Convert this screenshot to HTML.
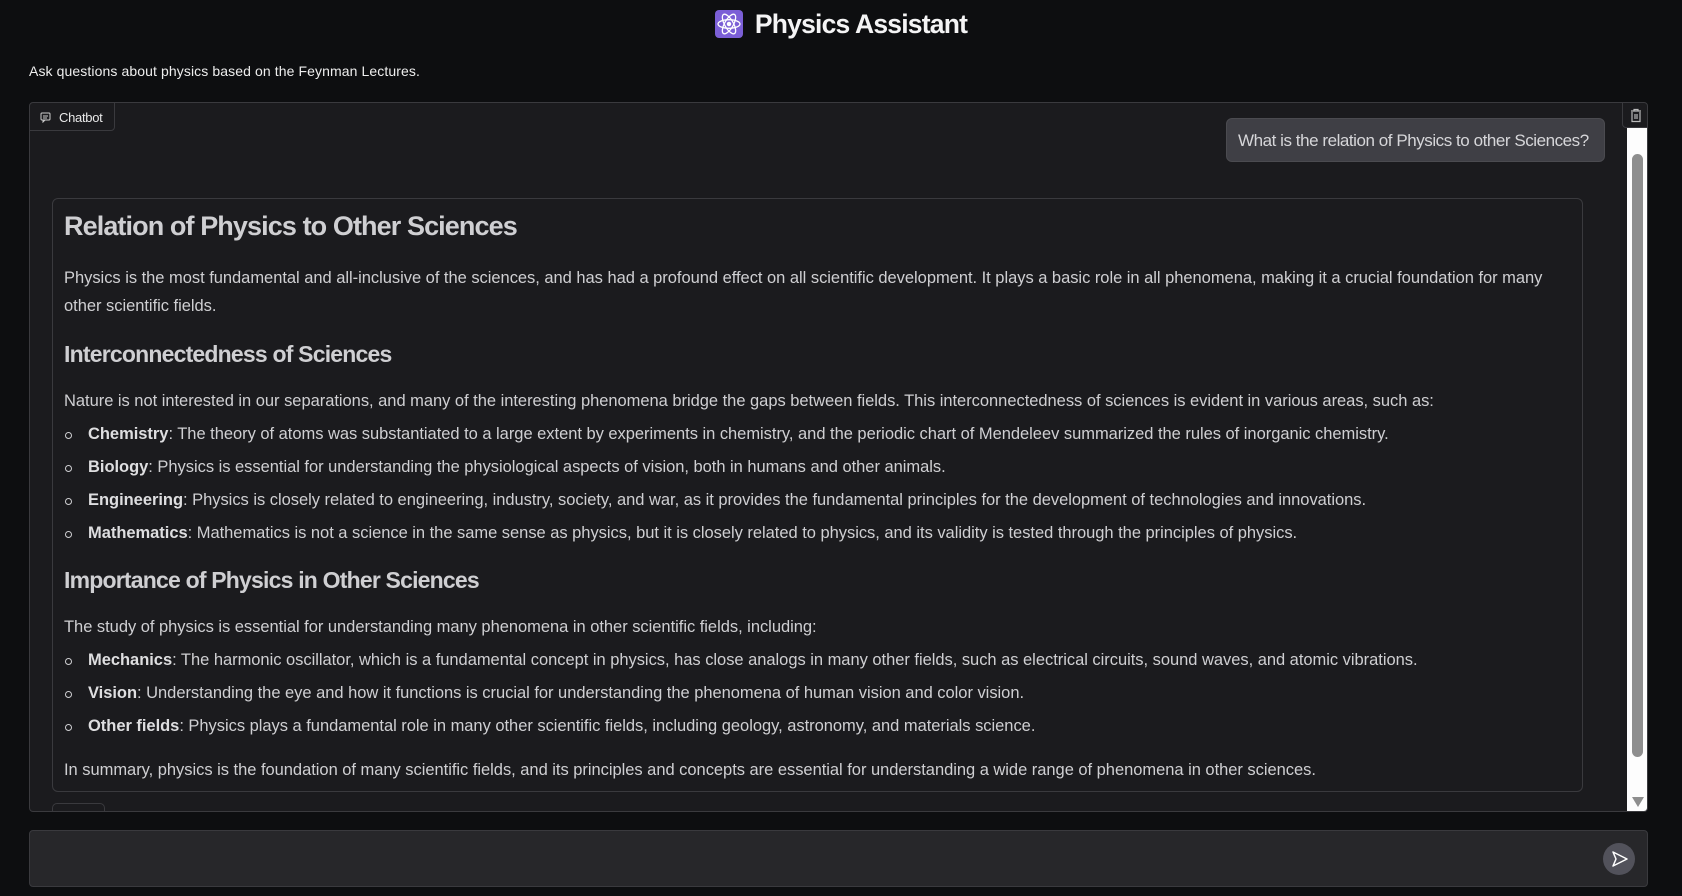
<!DOCTYPE html>
<html><head><meta charset="utf-8"><style>
*{box-sizing:border-box;margin:0;padding:0}
html,body{width:1682px;height:896px;overflow:hidden;background:#0d0e10;font-family:"Liberation Sans",sans-serif;color:#d0d0d3}
.title{position:absolute;top:7px;left:0;width:1682px;text-align:center;font-size:26.5px;font-weight:bold;color:#f4f4f5;letter-spacing:-0.8px;line-height:34px}
.title .ic{display:inline-block;width:28px;height:28px;background:#7b5fd6;border-radius:4px;vertical-align:-5px;margin-right:12px;position:relative}
.sub{position:absolute;left:29px;top:63px;font-size:14px;color:#eee;letter-spacing:0.1px}
.chat{position:absolute;left:29px;top:102px;width:1619px;height:710px;background:#1b1b1e;border:1px solid #3a3a3e;border-radius:4px;overflow:hidden}
.tab{position:absolute;left:-1px;top:-1px;width:86px;height:29px;border:1px solid #3a3a3e;border-radius:0 0 4px 0;font-size:13px;color:#e8e8e8;padding:7px 0 0 29px;letter-spacing:-0.3px}
.tab svg{position:absolute;left:10px;top:9px}
.trash{position:absolute;left:1592px;top:-1px;width:26px;height:26px;border:1px solid #3a3a3e;border-radius:0 4px 0 4px;background:#1b1b1e}
.track{position:absolute;left:1597px;top:25px;width:22px;height:690px;background:#fdfdfd}
.thumb{position:absolute;left:5px;top:26px;width:11px;height:603px;background:#8e8e8e;border-radius:6px}
.arrow{position:absolute;left:5px;top:669px;width:0;height:0;border-left:6px solid transparent;border-right:6px solid transparent;border-top:10px solid #8e8e8e}
.user{position:absolute;left:1196px;top:15px;width:379px;height:44px;background:#3f3f45;border:1px solid #4b4b50;border-radius:6px;font-size:17px;color:#d6d6d9;padding:12px 0 0 11px;letter-spacing:-0.45px;white-space:nowrap}
.bot{position:absolute;left:22px;top:95px;width:1531px;height:594px;border:1px solid #3a3a3e;border-radius:6px}
.l{position:absolute;left:11px;white-space:nowrap;font-size:16.5px;letter-spacing:-0.03px;color:#cfcfd2}
.h1{font-size:27px;font-weight:bold;letter-spacing:-0.9px;color:#cfcfd2}
.h2{font-size:23px;font-weight:bold;letter-spacing:-0.8px}
.li{left:35px}
.li:before{content:"";position:absolute;left:-23px;top:7px;width:5px;height:5px;border:1.3px solid #cfcfd2;border-radius:50%}
b{color:#dedee0}
.btns{position:absolute;left:22px;top:700px;width:53px;height:24px;border:1px solid #3a3a3e;border-radius:5px}
.input{position:absolute;left:29px;top:830px;width:1619px;height:57px;background:#27272a;border:1px solid #3a3a3e;border-radius:4px}
.send{position:absolute;left:1573px;top:12px;width:32px;height:32px;border-radius:50%;background:#52525b}
</style></head><body>
<div class="title"><span class="ic"><svg width="28" height="28" viewBox="0 0 28 28" fill="none" stroke="#fff" stroke-width="1.3"><ellipse cx="14" cy="14" rx="11" ry="4.3"/><ellipse cx="14" cy="14" rx="11" ry="4.3" transform="rotate(60 14 14)"/><ellipse cx="14" cy="14" rx="11" ry="4.3" transform="rotate(-60 14 14)"/><circle cx="14" cy="14" r="1.6" fill="#fff"/></svg></span>Physics Assistant</div>
<div class="sub">Ask questions about physics based on the Feynman Lectures.</div>
<div class="chat">
 <div class="tab"><svg width="11" height="11" viewBox="0 0 11 11" fill="none" stroke="#ccc" stroke-width="1"><rect x="1" y="1" width="9" height="7" rx="1"/><path d="M3 4h5M3 6h4M3 8v2l2-2"/></svg>Chatbot</div>
 <div class="trash"><svg width="26" height="26" viewBox="0 0 26 26" fill="none" stroke="#bbb" stroke-width="1.2"><path d="M8 8h10M11 8V6.5h4V8M9 9v9.5h8V9M12 11v5M14 11v5"/></svg></div>
 <div class="track"><div class="thumb"></div><div class="arrow"></div></div>
 <div class="user">What is the relation of Physics to other Sciences?</div>
 <div class="bot">
  <div class="l h1" style="top:12px">Relation of Physics to Other Sciences</div>
  <div class="l" style="top:70px">Physics is the most fundamental and all-inclusive of the sciences, and has had a profound effect on all scientific development. It plays a basic role in all phenomena, making it a crucial foundation for many</div>
  <div class="l" style="top:98px">other scientific fields.</div>
  <div class="l h2" style="top:142px">Interconnectedness of Sciences</div>
  <div class="l" style="top:193px">Nature is not interested in our separations, and many of the interesting phenomena bridge the gaps between fields. This interconnectedness of sciences is evident in various areas, such as:</div>
  <div class="l li" style="top:226px"><b>Chemistry</b>: The theory of atoms was substantiated to a large extent by experiments in chemistry, and the periodic chart of Mendeleev summarized the rules of inorganic chemistry.</div>
  <div class="l li" style="top:259px"><b>Biology</b>: Physics is essential for understanding the physiological aspects of vision, both in humans and other animals.</div>
  <div class="l li" style="top:292px"><b>Engineering</b>: Physics is closely related to engineering, industry, society, and war, as it provides the fundamental principles for the development of technologies and innovations.</div>
  <div class="l li" style="top:325px"><b>Mathematics</b>: Mathematics is not a science in the same sense as physics, but it is closely related to physics, and its validity is tested through the principles of physics.</div>
  <div class="l h2" style="top:368px">Importance of Physics in Other Sciences</div>
  <div class="l" style="top:419px">The study of physics is essential for understanding many phenomena in other scientific fields, including:</div>
  <div class="l li" style="top:452px"><b>Mechanics</b>: The harmonic oscillator, which is a fundamental concept in physics, has close analogs in many other fields, such as electrical circuits, sound waves, and atomic vibrations.</div>
  <div class="l li" style="top:485px"><b>Vision</b>: Understanding the eye and how it functions is crucial for understanding the phenomena of human vision and color vision.</div>
  <div class="l li" style="top:518px"><b>Other fields</b>: Physics plays a fundamental role in many other scientific fields, including geology, astronomy, and materials science.</div>
  <div class="l" style="top:562px">In summary, physics is the foundation of many scientific fields, and its principles and concepts are essential for understanding a wide range of phenomena in other sciences.</div>
 </div>
 <div class="btns"></div>
</div>
<div class="input"><div class="send"><svg width="32" height="32" viewBox="0 0 32 32" fill="none" stroke="#fff" stroke-width="1.5" stroke-linejoin="round"><path d="M10 9l14 7-14 7 3-7z"/></svg></div></div>
</body></html>
